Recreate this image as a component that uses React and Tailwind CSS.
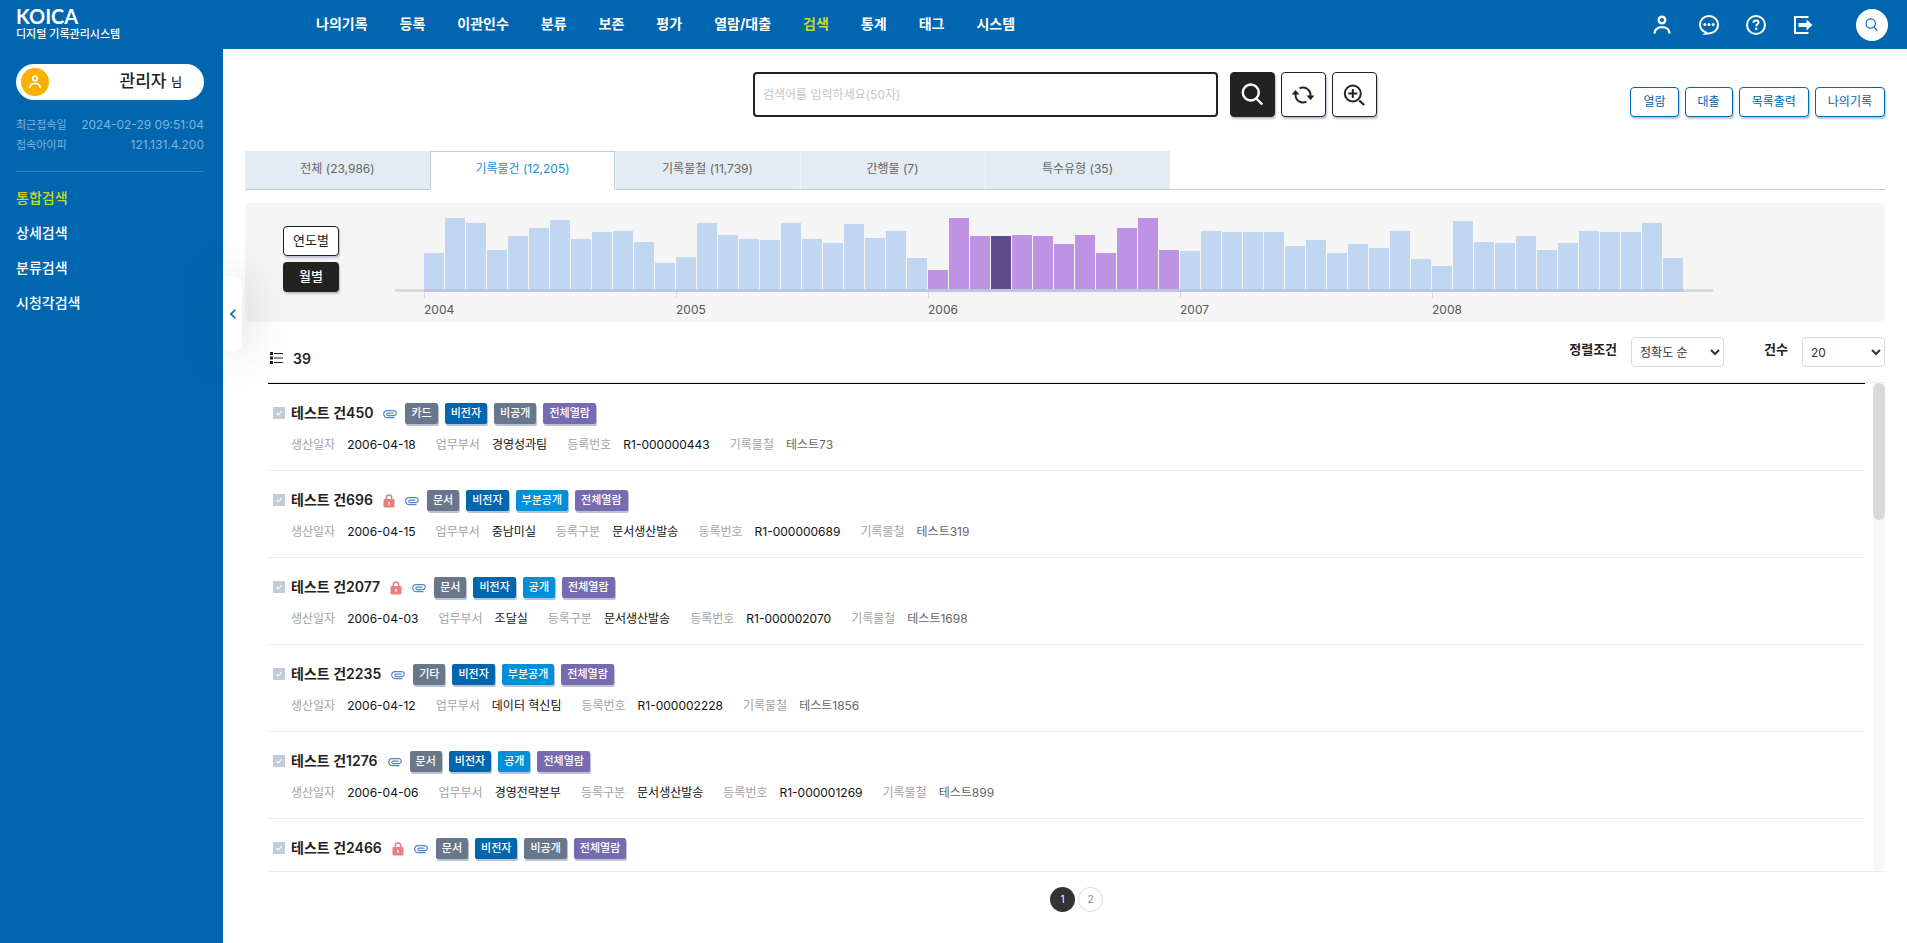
import React, { useState } from 'react';

const NAV = ['나의기록', '등록', '이관인수', '분류', '보존', '평가', '열람/대출', '검색', '통계', '태그', '시스템'];
const SIDE_MENU = ['통합검색', '상세검색', '분류검색', '시청각검색'];
const ACTIONS = ['열람', '대출', '목록출력', '나의기록'];

const TABS = [
  { name: '전체', count: '23,986' },
  { name: '기록물건', count: '12,205' },
  { name: '기록물철', count: '11,739' },
  { name: '간행물', count: '7' },
  { name: '특수유형', count: '35' },
];

// monthly counts, scaled to bar height
const MONTHLY = [
  { year: 2004, values: [36, 71, 66, 39, 53, 61, 69, 50, 57, 58, 47, 26] },
  { year: 2005, values: [32, 66, 54, 50, 49, 66, 50, 46, 65, 51, 58, 31] },
  { year: 2006, values: [19, 71, 53, 53, 54, 53, 45, 54, 36, 61, 71, 39] },
  { year: 2007, values: [38, 58, 57, 57, 57, 43, 49, 36, 45, 41, 58, 30] },
  { year: 2008, values: [23, 68, 47, 46, 53, 39, 46, 58, 57, 57, 66, 31] },
];

const BADGE_COLORS = {
  비전자: 'bg-[#0066b0]',
  부분공개: 'bg-[#008fd9]',
  공개: 'bg-[#008fd9]',
  전체열람: 'bg-[#766ab0]',
};

const RECORDS = [
  { id: 450, lock: false, badges: ['카드', '비전자', '비공개', '전체열람'], date: '2006-04-18', dept: '경영성과팀', kind: '', no: 'R1-000000443', folder: '테스트73' },
  { id: 696, lock: true, badges: ['문서', '비전자', '부분공개', '전체열람'], date: '2006-04-15', dept: '중남미실', kind: '문서생산발송', no: 'R1-000000689', folder: '테스트319' },
  { id: 2077, lock: true, badges: ['문서', '비전자', '공개', '전체열람'], date: '2006-04-03', dept: '조달실', kind: '문서생산발송', no: 'R1-000002070', folder: '테스트1698' },
  { id: 2235, lock: false, badges: ['기타', '비전자', '부분공개', '전체열람'], date: '2006-04-12', dept: '데이터 혁신팀', kind: '', no: 'R1-000002228', folder: '테스트1856' },
  { id: 1276, lock: false, badges: ['문서', '비전자', '공개', '전체열람'], date: '2006-04-06', dept: '경영전략본부', kind: '문서생산발송', no: 'R1-000001269', folder: '테스트899' },
  { id: 2466, lock: true, badges: ['문서', '비전자', '비공개', '전체열람'] },
];

function UserIcon({ className }) {
  return (
    <svg className={className} viewBox="0 0 20 20" fill="none" stroke="currentColor" strokeWidth="2.4">
      <circle cx="10" cy="5" r="3.3" />
      <path d="M2.500 18.400c0-3.800 3-6.300 7.500-6.300s7.500 2.500 7.500 6.300" />
    </svg>
  );
}

function ChatIcon() {
  return (
    <svg className="size-5" viewBox="0 0 20 20" fill="none" stroke="currentColor" strokeWidth="2">
      <path d="M6.500 17.200C3.300 15.900 1 13 1 9.500 1 4.800 5 1 10 1s9 3.800 9 8.500c0 5.500-4.500 9.300-12.500 9.300.8-.5 1-1 0-1.600z" />
      <g fill="currentColor" stroke="none">
        <circle cx="5.800" cy="9.600" r="1.500" />
        <circle cx="10" cy="9.600" r="1.500" />
        <circle cx="14.200" cy="9.600" r="1.500" />
      </g>
    </svg>
  );
}

function HelpIcon() {
  return (
    <svg className="size-5" viewBox="0 0 20 20" fill="none" stroke="currentColor" strokeWidth="2">
      <circle cx="10" cy="10" r="9" />
      <path d="M7.500 7.800c0-1.500 1.100-2.300 2.500-2.300s2.500.8 2.500 2.100c0 1.700-2.300 1.700-2.300 3.700" />
      <path d="M9.100 13.800h2.200" strokeWidth="2.200" />
    </svg>
  );
}

function LogoutIcon() {
  return (
    <svg className="size-5" viewBox="0 0 20 20" fill="currentColor">
      <path d="M1 1h14.500v2H3v14h12.500v2H1z" />
      <path d="M5.500 8h8V4.500L19.500 10l-6 5.500V12h-8z" />
    </svg>
  );
}

function SearchIcon({ className, width }) {
  return (
    <svg className={className} viewBox="0 0 24 24" fill="none" stroke="currentColor" strokeWidth={width}>
      <circle cx="9.800" cy="9.500" r="8" />
      <path d="M15.300 15.500l6 6" />
    </svg>
  );
}

function ZoomIcon() {
  return (
    <svg className="size-6" viewBox="0 0 24 24" fill="none" stroke="currentColor" strokeWidth="2">
      <circle cx="9.800" cy="10.500" r="8" />
      <path d="M9.800 6v9M5.300 10.500h9" />
      <path d="M16.200 17.500l5 4.500" strokeWidth="2.300" />
    </svg>
  );
}

function RefreshIcon() {
  return (
    <svg className="size-6" viewBox="0 0 24 24" fill="none" stroke="currentColor" strokeWidth="2">
      <path d="M7.500 5.400A7.500 7.500 0 0 1 18.500 12v2" />
      <path d="M14.500 18.600A7.500 7.500 0 0 1 3.500 12v-2" />
      <path d="M14.500 12.500h8l-4 4.500zM-.5 11.500h8L3.500 7z" fill="currentColor" stroke="none" />
    </svg>
  );
}

function ClipIcon() {
  return (
    <svg className="ml-0.5 h-2.5 w-3.5" viewBox="0 0 14 10" fill="none" stroke="#4f88c4" strokeWidth="1.200">
      <path d="M11.500 8.600H4.200a3.500 3.500 0 0 1 0-7h6.600a2.500 2.500 0 0 1 0 5H5a1.200 1.200 0 0 1 0-2.400h5.500" />
    </svg>
  );
}

function LockIcon() {
  return (
    <svg className="ml-0.5 h-3.5 w-3" viewBox="0 0 12 14">
      <path d="M3.300 6V3.800a2.700 2.700 0 0 1 5.400 0V6" fill="none" stroke="#e98080" strokeWidth="1.500" />
      <rect x="0.500" y="5" width="11" height="8.500" rx="1" fill="#e98080" />
      <path d="M6 8v2.500" stroke="#fff" strokeWidth="1.400" />
    </svg>
  );
}

function ListIcon() {
  return (
    <svg className="h-3 w-[13px]" viewBox="0 0 13 12" fill="#222">
      <path d="M0 0h3v3H0zM0 4.500h3v3H0zM0 9h3v3H0zM4 1h9v1H4zM4 5.500h9v1H4zM4 10h9v1H4z" />
    </svg>
  );
}

function Sidebar() {
  return (
    <aside className="relative w-[223px] shrink-0 bg-[#0066b0] pr-[19px] pl-4 text-white">
      <a href="#" className="block h-[49px] pt-1.5">
        <span className="block font-[Lato] text-[20px] leading-5 font-bold">KOICA</span>
        <span className="block text-[11px] leading-4 font-medium">디지털 기록관리시스템</span>
      </a>

      <div className="mt-[15px] flex h-9 items-center rounded-full bg-white pr-[22px] pl-[5px] text-[#222]">
        <span className="flex size-7 items-center justify-center rounded-full bg-[#fab000] text-white">
          <UserIcon className="size-3.5" />
        </span>
        <p className="ml-auto text-[17px] leading-6 font-medium">
          관리자 <span className="text-[12px]">님</span>
        </p>
      </div>

      <dl className="mt-[15px] border-b border-[#2b80c0] pb-4 text-[12px] leading-5 text-[#80b3d8]">
        <div className="flex justify-between">
          <dt className="text-[11px]">최근접속일</dt>
          <dd>2024-02-29 09:51:04</dd>
        </div>
        <div className="flex justify-between">
          <dt className="text-[11px]">접속아이피</dt>
          <dd>121.131.4.200</dd>
        </div>
      </dl>

      <nav className="mt-2">
        {SIDE_MENU.map((m, i) => (
          <a key={m} href="#" className={`block text-[14px] leading-[35px] font-medium ${i === 0 ? 'text-[#c8d92b]' : ''}`}>{m}</a>
        ))}
      </nav>

      {/* collapse handle hangs over the content area */}
      <button
        type="button"
        aria-label="메뉴 접기"
        className="absolute top-[276px] left-full flex h-[75px] w-[19px] items-center justify-center rounded-r-lg bg-white text-[#0066b0] shadow-[4px_0_40px_rgba(60,80,100,0.25)]"
      >
        <svg className="h-2.5 w-1.5" viewBox="0 0 6 10" fill="none" stroke="currentColor" strokeWidth="1.600">
          <path d="M5.300.7L1 5l4.300 4.300" />
        </svg>
      </button>
    </aside>
  );
}

function Header() {
  return (
    <header className="flex h-[49px] shrink-0 items-center bg-[#0066b0] pr-[19px] pl-[93px] text-white">
      <nav className="flex gap-8 pb-0.5 text-[14px] leading-5 font-bold">
        {NAV.map(n => (
          <a key={n} href="#" className={n === '검색' ? 'text-[#c8d92b]' : ''}>{n}</a>
        ))}
      </nav>
      <div className="ml-auto flex items-center gap-[27px]">
        <button type="button" aria-label="내 정보"><UserIcon className="size-5" /></button>
        <button type="button" aria-label="메시지"><ChatIcon /></button>
        <button type="button" aria-label="도움말"><HelpIcon /></button>
        <button type="button" aria-label="로그아웃"><LogoutIcon /></button>
        <button type="button" aria-label="검색" className="ml-4 flex size-8 items-center justify-center rounded-full bg-white text-[#0066b0]">
          <SearchIcon className="size-3.5" width="2" />
        </button>
      </div>
    </header>
  );
}

function SearchBar() {
  const iconBtn = 'flex size-[45px] items-center justify-center rounded-sm border border-[#222] shadow-[1px_2px_2px_#b9c3d3]';
  return (
    <div className="grid grid-cols-[1fr_minmax(0,624px)_1fr] items-end">
      <form className="col-start-2 flex gap-1.5" onSubmit={e => e.preventDefault()}>
        <input
          type="text"
          aria-label="검색어"
          placeholder="검색어를 입력하세요(50자)"
          className="mr-1.5 h-[45px] min-w-0 flex-1 rounded-sm border-2 border-[#222] px-2 text-[12px] placeholder:text-[#c4c4c4]"
        />
        <button type="submit" aria-label="검색" className={`${iconBtn} bg-[#222] text-white`}>
          <SearchIcon className="size-6" width="2.400" />
        </button>
        <button type="reset" aria-label="초기화" className={`${iconBtn} bg-white text-[#222]`}><RefreshIcon /></button>
        <button type="button" aria-label="상세검색" className={`${iconBtn} bg-white text-[#222]`}><ZoomIcon /></button>
      </form>
      <div className="flex justify-end gap-1.5">
        {ACTIONS.map(a => (
          <button key={a} type="button" className="h-[30px] rounded-sm border border-[#0066b0] bg-white px-3 text-[12px] text-[#0066b0] shadow-[1px_2px_2px_#b9c3d3]">{a}</button>
        ))}
      </div>
    </div>
  );
}

function Tabs() {
  const [active, setActive] = useState('기록물건');
  return (
    <div className="mt-[34px] flex border-b border-[#c0ced8]">
      {TABS.map(t => (
        <button
          key={t.name}
          type="button"
          onClick={() => setActive(t.name)}
          className={`-mb-px h-[39px] w-[185px] border pb-1 text-[12px] ${active === t.name
            ? 'border-[#c0ced8] border-b-white bg-white text-[#1b8fd6]'
            : 'border-transparent border-b-[#c0ced8] border-l-[#eff4f8] bg-[#e3ebf3] text-[#666]'}`}
        >
          {t.name} ({t.count})
        </button>
      ))}
    </div>
  );
}

function barColor(year, month) {
  if (year !== 2006) return 'bg-[#c0d6f1]';
  return month === 3 ? 'bg-[#5f4b8b]' : 'bg-[#be93e4]';
}

function Timeline() {
  return (
    <section className="mt-[13px] flex h-[119px] shrink-0 gap-14 rounded-md bg-[#f5f5f5] px-[38px]">
      <div className="flex w-14 shrink-0 flex-col gap-1.5 pt-[23px] text-[13px]">
        <button type="button" className="h-[30px] rounded-sm border border-[#222] bg-white text-[#222] shadow-[1px_2px_2px_#b9c3d3]">연도별</button>
        <button type="button" className="h-[30px] rounded-sm bg-[#222] font-medium text-white shadow-[1px_2px_2px_#b9c3d3]">월별</button>
      </div>
      <div className="max-w-[1318px] flex-1 pt-[15px]">
        <div className="flex h-[71px] items-end px-[29px]">
          {MONTHLY.map(({ year, values }) => values.map((v, m) => (
            <div key={`${year}-${m}`} className="flex-1 pr-px">
              <div className={barColor(year, m)} style={{ height: v }} />
            </div>
          )))}
        </div>
        <div className="h-[3px] bg-[#dadada] px-[29px]">
          <div className="h-full bg-[#b9c8df]" />
        </div>
        <div className="flex px-[29px] text-[12px] leading-4 text-[#555]">
          {MONTHLY.map(({ year }) => (
            <div key={year} className="flex-1">
              <div className="h-1.5 w-px bg-[#dadada]" />
              <p className="mt-1">{year}</p>
            </div>
          ))}
        </div>
      </div>
    </section>
  );
}

function ListToolbar() {
  const select = 'h-[30px] rounded-sm border border-[#d9d9d9] bg-white pl-1 text-[12px] text-[#333]';
  return (
    <div className="mt-[15px] flex h-[45px] shrink-0 items-start pl-[25px]">
      <p className="flex h-[42px] items-center gap-2.5 text-[14px] font-semibold text-[#222]">
        <ListIcon /> 39
      </p>
      <div className="ml-auto flex text-[13px] leading-6 font-semibold text-[#222]">
        <label htmlFor="sort">정렬조건</label>
        <select id="sort" className={`${select} ml-3.5 w-[93px] font-normal`}>
          <option>정확도 순</option>
          <option>생산일자 순</option>
        </select>
        <label htmlFor="rows" className="ml-10">건수</label>
        <select id="rows" className={`${select} ml-3.5 w-[83px] font-normal`} defaultValue="20">
          <option>20</option>
          <option>50</option>
        </select>
      </div>
    </div>
  );
}

function Field({ label, children, muted }) {
  return (
    <div className="flex gap-3">
      <dt className="text-[#a3a3a3]">{label}</dt>
      <dd className={muted ? 'text-[#666]' : 'text-[#111]'}>{children}</dd>
    </div>
  );
}

function RecordRow({ record }) {
  const id = `rec-${record.id}`;
  return (
    <li className="border-b border-[#ececec] pt-[19px] pb-[15px] pl-[5px]">
      <div className="flex h-[21px] items-center gap-2">
        <div className="flex items-center gap-1.5 pb-0.5">
          <span className="relative flex">
            <input id={id} type="checkbox" className="size-3 appearance-none bg-[#c0ccd8]" />
            <svg className="pointer-events-none absolute inset-0 size-3" viewBox="0 0 12 12" fill="none" stroke="#fff" strokeWidth="1.200">
              <path d="M3.300 5.800l2 2 3.600-3.600" />
            </svg>
          </span>
          <label htmlFor={id} className="text-[14px] leading-5 font-semibold text-[#222]">테스트 건{record.id}</label>
        </div>
        {record.lock && <LockIcon />}
        <ClipIcon />
        <div className="flex gap-[7px]">
          {record.badges.map(b => (
            <span key={b} className={`h-[21px] rounded-xs px-1.5 text-[11px] leading-5 font-medium text-white shadow-[1px_2px_0_#b9c3d3] ${BADGE_COLORS[b] || 'bg-[#68778a]'}`}>{b}</span>
          ))}
        </div>
      </div>
      {record.date && (
        <dl className="mt-[11px] flex h-5 gap-5 pl-[18px] text-[12px] leading-5">
          <Field label="생산일자">{record.date}</Field>
          <Field label="업무부서">{record.dept}</Field>
          {record.kind && <Field label="등록구분">{record.kind}</Field>}
          <Field label="등록번호">{record.no}</Field>
          <Field label="기록물철" muted>{record.folder}</Field>
        </dl>
      )}
    </li>
  );
}

function Pagination() {
  return (
    <nav aria-label="페이지" className="flex h-[71px] shrink-0 justify-center gap-[3px] pt-[15px] pl-[23px] text-[10px]">
      <button type="button" className="size-[25px] rounded-full bg-[#333] text-white">1</button>
      <button type="button" className="size-[25px] rounded-full border border-[#ddd] text-[#888]">2</button>
    </nav>
  );
}

export default function App() {
  return (
    <div className="flex h-screen bg-white font-[Inter,'Noto_Sans_CJK_KR',sans-serif] text-[#222]">
      <Sidebar />
      <div className="flex min-w-0 flex-1 flex-col">
        <Header />
        <main className="flex min-h-0 flex-1 flex-col px-[22px] pt-[23px]">
          <SearchBar />
          <Tabs />
          <Timeline />
          <ListToolbar />
          <div className="ml-[23px] flex min-h-0 flex-1 gap-2 border-y border-[#ececec]">
            <ul className="flex-1 overflow-hidden border-t border-black">
              {RECORDS.map(r => <RecordRow key={r.id} record={r} />)}
            </ul>
            <div className="w-3 rounded-full bg-[#f7f7f7]">
              <div className="h-[28%] rounded-full bg-[#d9d9d9]" />
            </div>
          </div>
          <Pagination />
        </main>
      </div>
    </div>
  );
}
